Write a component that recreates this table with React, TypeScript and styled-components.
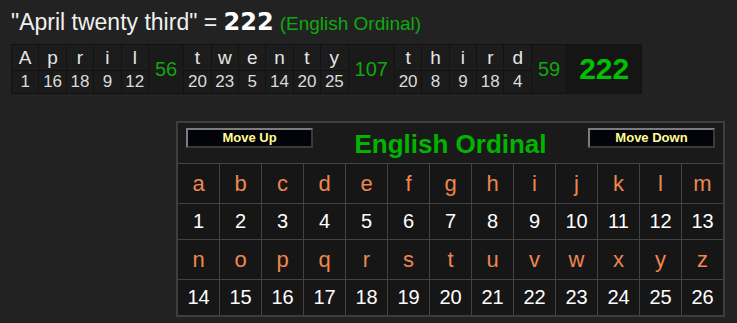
import React from "react";
import styled, { createGlobalStyle } from "styled-components";

const GlobalStyle = createGlobalStyle`
  html, body {
    margin: 0;
    padding: 0;
    background: #222222;
  }
  body {
    font-family: "Liberation Sans", Arial, sans-serif;
    color: #e8e8e8;
  }
`;

const Page = styled.div`
  padding: 8px 0 0 11px;
  display: flex;
  flex-direction: column;
  align-items: flex-start;
`;

const Heading = styled.div`
  display: flex;
  align-items: baseline;
  height: 28px;
  line-height: 28px;
  white-space: pre;
`;

const Phrase = styled.span`
  font-size: 23px;
  color: #f0f0f0;
`;

const HeadingTotal = styled.span`
  font-family: "DejaVu Sans", Verdana, sans-serif;
  font-weight: bold;
  font-size: 24px;
  color: #ffffff;
`;

const HeadingCipher = styled.span`
  font-size: 19px;
  color: #10a810;
  margin-left: 6px;
`;

const WordTable = styled.div`
  margin-top: 8px;
  display: flex;
  gap: 1px;
  padding: 1px;
  background: #121212;
`;

const LetterColumn = styled.div`
  width: 26.4px;
  display: flex;
  flex-direction: column;
  gap: 1px;
`;

const LetterCell = styled.div`
  height: 25px;
  background: #1c1c1c;
  display: flex;
  align-items: center;
  justify-content: center;
  font-size: 19px;
  color: #e6e6e6;
`;

const ValueCell = styled.div`
  height: 22px;
  background: #1b1b1b;
  display: flex;
  align-items: center;
  justify-content: center;
  font-size: 17px;
  color: #dcdcdc;
`;

const SumCell = styled.div`
  padding: 0 6px;
  display: flex;
  align-items: center;
  justify-content: center;
  background: #1a1a1a;
  font-size: 20px;
  color: #10a810;
`;

const GrandCell = styled.div`
  padding: 0 12px;
  display: flex;
  align-items: center;
  justify-content: center;
  background: #151515;
  font-size: 30px;
  font-weight: bold;
  color: #00c000;
`;

const CipherTable = styled.div`
  margin: 27px 0 0 165px;
  display: grid;
  grid-template-columns: repeat(13, 41px);
  grid-template-rows: 40px 39px 35px 39px 35px;
  gap: 1px;
  background: #434343;
  border: 2px solid #3e3e3e;
`;

const CipherHeader = styled.div`
  grid-column: 1 / -1;
  background: #1a1a1a;
  display: flex;
  justify-content: space-between;
  align-items: flex-start;
  padding: 5px 8px 0 8px;
`;

const ShiftButton = styled.button`
  width: 127px;
  height: 20px;
  box-sizing: border-box;
  padding: 0;
  background: #03030c;
  border: 2px solid;
  border-color: #7c7c7c #3a3a3a #3a3a3a #7c7c7c;
  color: #ffff90;
  font-family: "Liberation Sans", Arial, sans-serif;
  font-weight: bold;
  font-size: 13px;
  line-height: 16px;
`;

const CipherName = styled.div`
  align-self: center;
  margin-top: -3px;
  font-size: 26px;
  font-weight: bold;
  color: #00b400;
`;

const GridCell = styled.div<{ $letter?: boolean }>`
  background: #161616;
  display: flex;
  align-items: center;
  justify-content: center;
  font-size: ${(p) => (p.$letter ? "22px" : "20px")};
  color: ${(p) => (p.$letter ? "#ee8650" : "#ffffff")};
  padding-top: ${(p) => (p.$letter ? "1px" : "0")};
`;

const ordinal = (ch: string) => ch.toLowerCase().charCodeAt(0) - 96;

const words = ["April", "twenty", "third"];
const alphabet = "abcdefghijklmnopqrstuvwxyz".split("");

export default function App() {
  const sums = words.map((w) => w.split("").reduce((s, c) => s + ordinal(c), 0));
  const total = sums.reduce((a, b) => a + b, 0);

  return (
    <>
      <GlobalStyle />
      <Page>
        <Heading>
          <Phrase>{`"April twenty third" = `}</Phrase>
          <HeadingTotal>{total}</HeadingTotal>
          <HeadingCipher>(English Ordinal)</HeadingCipher>
        </Heading>

        <WordTable>
          {words.map((w, wi) => (
            <React.Fragment key={w}>
              {w.split("").map((c, ci) => (
                <LetterColumn key={ci}>
                  <LetterCell>{c}</LetterCell>
                  <ValueCell>{ordinal(c)}</ValueCell>
                </LetterColumn>
              ))}
              <SumCell>{sums[wi]}</SumCell>
            </React.Fragment>
          ))}
          <GrandCell>{total}</GrandCell>
        </WordTable>

        <CipherTable>
          <CipherHeader>
            <ShiftButton>Move Up</ShiftButton>
            <CipherName>English Ordinal</CipherName>
            <ShiftButton>Move Down</ShiftButton>
          </CipherHeader>
          {alphabet.slice(0, 13).map((c) => (
            <GridCell key={c} $letter>{c}</GridCell>
          ))}
          {alphabet.slice(0, 13).map((c) => (
            <GridCell key={c + "n"}>{ordinal(c)}</GridCell>
          ))}
          {alphabet.slice(13).map((c) => (
            <GridCell key={c} $letter>{c}</GridCell>
          ))}
          {alphabet.slice(13).map((c) => (
            <GridCell key={c + "n"}>{ordinal(c)}</GridCell>
          ))}
        </CipherTable>
      </Page>
    </>
  );
}
